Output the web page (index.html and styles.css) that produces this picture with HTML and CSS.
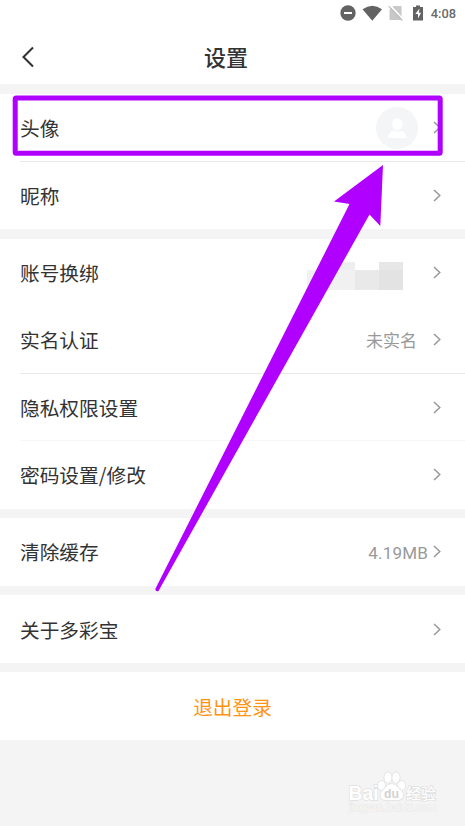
FILE: index.html
```html
<!DOCTYPE html>
<html lang="zh-CN">
<head>
<meta charset="utf-8">
<title>设置</title>
<link rel="stylesheet" href="styles.css">
</head>
<body>
<svg class="defs" width="0" height="0"><symbol id="chevron" viewBox="0 0 8 13"><path d="M1 1 6.800 6.500 1 12" fill="none" stroke="#999" stroke-width="1.500"/></symbol></svg>
<div class="screen">
  <div class="status">
    <svg class="status-icons" width="88" height="18" viewBox="0 0 88 18">
      <circle cx="8" cy="9" r="7.700" fill="#636363"/><rect x="4" y="8" width="8" height="2" fill="#fff"/>
      <path d="M22.500 5.200Q32.500-1.800 42 5.200L32.300 16.800Z" fill="#636363"/>
      <path d="M53.500 2H61.500V16H49.500V5.500Z" fill="#c8c8c8"/><path d="M49.800 1.200 63.300 15.500" stroke="#fff" stroke-width="1.800"/><path d="M48.800 2.200 62.300 16.500" stroke="#bbb" stroke-width="1.100"/>
      <path d="M73 3H76V1.500H80V3H83V16.500H73Z" fill="#636363"/><path d="M79.500 4.500 75.300 10H78V14.500L81 8.800H78.800Z" fill="#fff"/>
    </svg>
    <span class="clock">4:08</span>
  </div>
  <header class="header">
    <svg class="back" width="14" height="22" viewBox="0 0 14 22"><path d="M12 1.500 2.500 11 12 20.500" fill="none" stroke="#333" stroke-width="2.100"/></svg>
    <h1>设置</h1>
  </header>
  <main class="groups">
    <section class="group">
      <div class="row line"><span class="label">头像</span>
        <svg class="avatar" width="42" height="42" viewBox="0 0 42 42"><circle cx="21" cy="21" r="21" fill="#f4f5f7"/><ellipse cx="21.300" cy="17.200" rx="5.200" ry="6.200" fill="#fff"/><path d="M12 31Q12 25 18 23.500Q21.300 27 24.500 23.500Q30.500 25 30.500 31Z" fill="#fff"/></svg>
        <svg class="chev"><use href="#chevron"/></svg></div>
      <div class="row"><span class="label">昵称</span><svg class="chev"><use href="#chevron"/></svg></div>
    </section>
    <section class="group">
      <div class="row"><span class="label">账号换绑</span>
        <svg class="mosaic" width="110" height="30" viewBox="0 0 110 30"><path d="M14 9H62V29H14Z" fill="#f1f1f1"/><path d="M38 1H62V9H38Z" fill="#eee"/><path d="M62 9H86V29H62Z" fill="#e9e9e9"/><path d="M86 1H110V9H86Z" fill="#e7e7e7"/><path d="M86 9H110V29H86Z" fill="#e3e3e3"/></svg>
        <svg class="chev"><use href="#chevron"/></svg></div>
      <div class="row line"><span class="label">实名认证</span><span class="value">未实名</span><svg class="chev"><use href="#chevron"/></svg></div>
      <div class="row line faint"><span class="label">隐私权限设置</span><svg class="chev"><use href="#chevron"/></svg></div>
      <div class="row"><span class="label">密码设置/修改</span><svg class="chev"><use href="#chevron"/></svg></div>
    </section>
    <section class="group">
      <div class="row"><span class="label">清除缓存</span><span class="value size">4.19MB</span><svg class="chev"><use href="#chevron"/></svg></div>
    </section>
    <section class="group">
      <div class="row"><span class="label">关于多彩宝</span><svg class="chev"><use href="#chevron"/></svg></div>
    </section>
    <section class="group"><div class="row logout">退出登录</div></section>
  </main>
  <svg class="overlay" width="465" height="826" viewBox="0 0 465 826">
    <rect x="15.200" y="98" width="425" height="55.200" rx="1" fill="none" stroke="#b000ff" stroke-width="5"/>
    <path d="M383 165 334 201.500 349.500 204 155.300 589Q155.500 592 158.500 591L369.500 214.500 380.300 226Z" fill="#b000ff"/>
  </svg>
  <svg class="watermark" width="110" height="52" viewBox="0 0 110 52">
    <g fill="#fff" stroke="#dfdfdf" stroke-width="1.500" paint-order="stroke">
      <text class="brand" x="6.500" y="35" textLength="30" lengthAdjust="spacingAndGlyphs">Bai</text>
      <ellipse cx="39.500" cy="20.500" rx="3.500" ry="4.500"/><ellipse cx="46" cy="12.500" rx="3.700" ry="5.200"/><ellipse cx="54" cy="12.500" rx="3.700" ry="5.200"/><ellipse cx="59.500" cy="20.500" rx="3.500" ry="4.500"/>
      <path d="M49.500 19C54 19 56 23 59 25C63 29 61 35 56 35H43.500C38 35 37 29 41 25C44 23 45 19 49.500 19Z"/>
      <text class="jy" x="64" y="34" textLength="30" lengthAdjust="spacingAndGlyphs">经验</text>
    </g>
    <text class="du" x="42" y="32.500" textLength="15" lengthAdjust="spacingAndGlyphs" fill="#d2d2d2">du</text>
    <text class="domain" x="6.500" y="45.500" textLength="88" lengthAdjust="spacingAndGlyphs" fill="#f9f9f9" stroke="#e5e5e5" stroke-width="0.800" paint-order="stroke">jingyan.baidu.com</text>
  </svg>
</div>
</body>
</html>
```
FILE: styles.css
```css
* { box-sizing: border-box; }
body { margin: 0; background: #f4f4f4; color: #333; font-family: "Noto Sans CJK SC", sans-serif; }
svg { flex: none; }
.defs { position: absolute; }
.screen { position: relative; width: 465px; height: 826px; overflow: hidden; }
.status { height: 30px; padding: 4px 9px 0 0; display: flex; justify-content: flex-end; background: #fff; }
.clock { width: 28px; font: 500 12.800px/18px Roboto, sans-serif; color: #6a6a6a; text-align: right; white-space: nowrap; margin-top: 1px; }
.header { height: 54px; background: #fff; display: grid; grid-template-columns: 53px 1fr 66px; align-items: center; }
.back { margin-left: 21px; }
h1 { margin: 0 0 2px; font-size: 22px; line-height: 32px; font-weight: 500; text-align: center; }
.groups { padding-top: 10px; display: flex; flex-direction: column; gap: 9.600px; }
.group { background: #fff; }
.row { height: 67.500px; padding: 0 24px 0 20px; display: flex; align-items: center; }
.label { flex: 1; font-size: 19.700px; line-height: 30px; padding-top: 1px; }
.line { background: linear-gradient(#e9e9e9, #e9e9e9) 20px 100% / 100% 1px no-repeat; }
.faint { background-image: linear-gradient(#f6f6f6, #f6f6f6); }
.chev { width: 8px; height: 13px; margin-left: 15px; }
.value { font-size: 17px; line-height: 26px; color: #999; margin-right: 1px; }
.size { font-family: Roboto, sans-serif; letter-spacing: 0.200px; padding-top: 2px; margin-right: 0; }
.size + .chev { margin-left: 5px; }
.mosaic { margin: 8px 14px 0 0; }
.mosaic + .chev { margin-left: 16px; }
.logout { justify-content: center; padding: 0; color: #ff9315; font-size: 19.700px; }
.overlay { position: absolute; left: 0; top: 0; }
.watermark { position: absolute; left: 342px; top: 765px; }
.brand { font: 700 20px "Liberation Sans", sans-serif; }
.jy { font: 500 15px "Noto Sans CJK SC", sans-serif; }
.du { font: 700 12.500px "Liberation Sans", sans-serif; }
.domain { font: 10.500px "Liberation Sans", sans-serif; }
```
